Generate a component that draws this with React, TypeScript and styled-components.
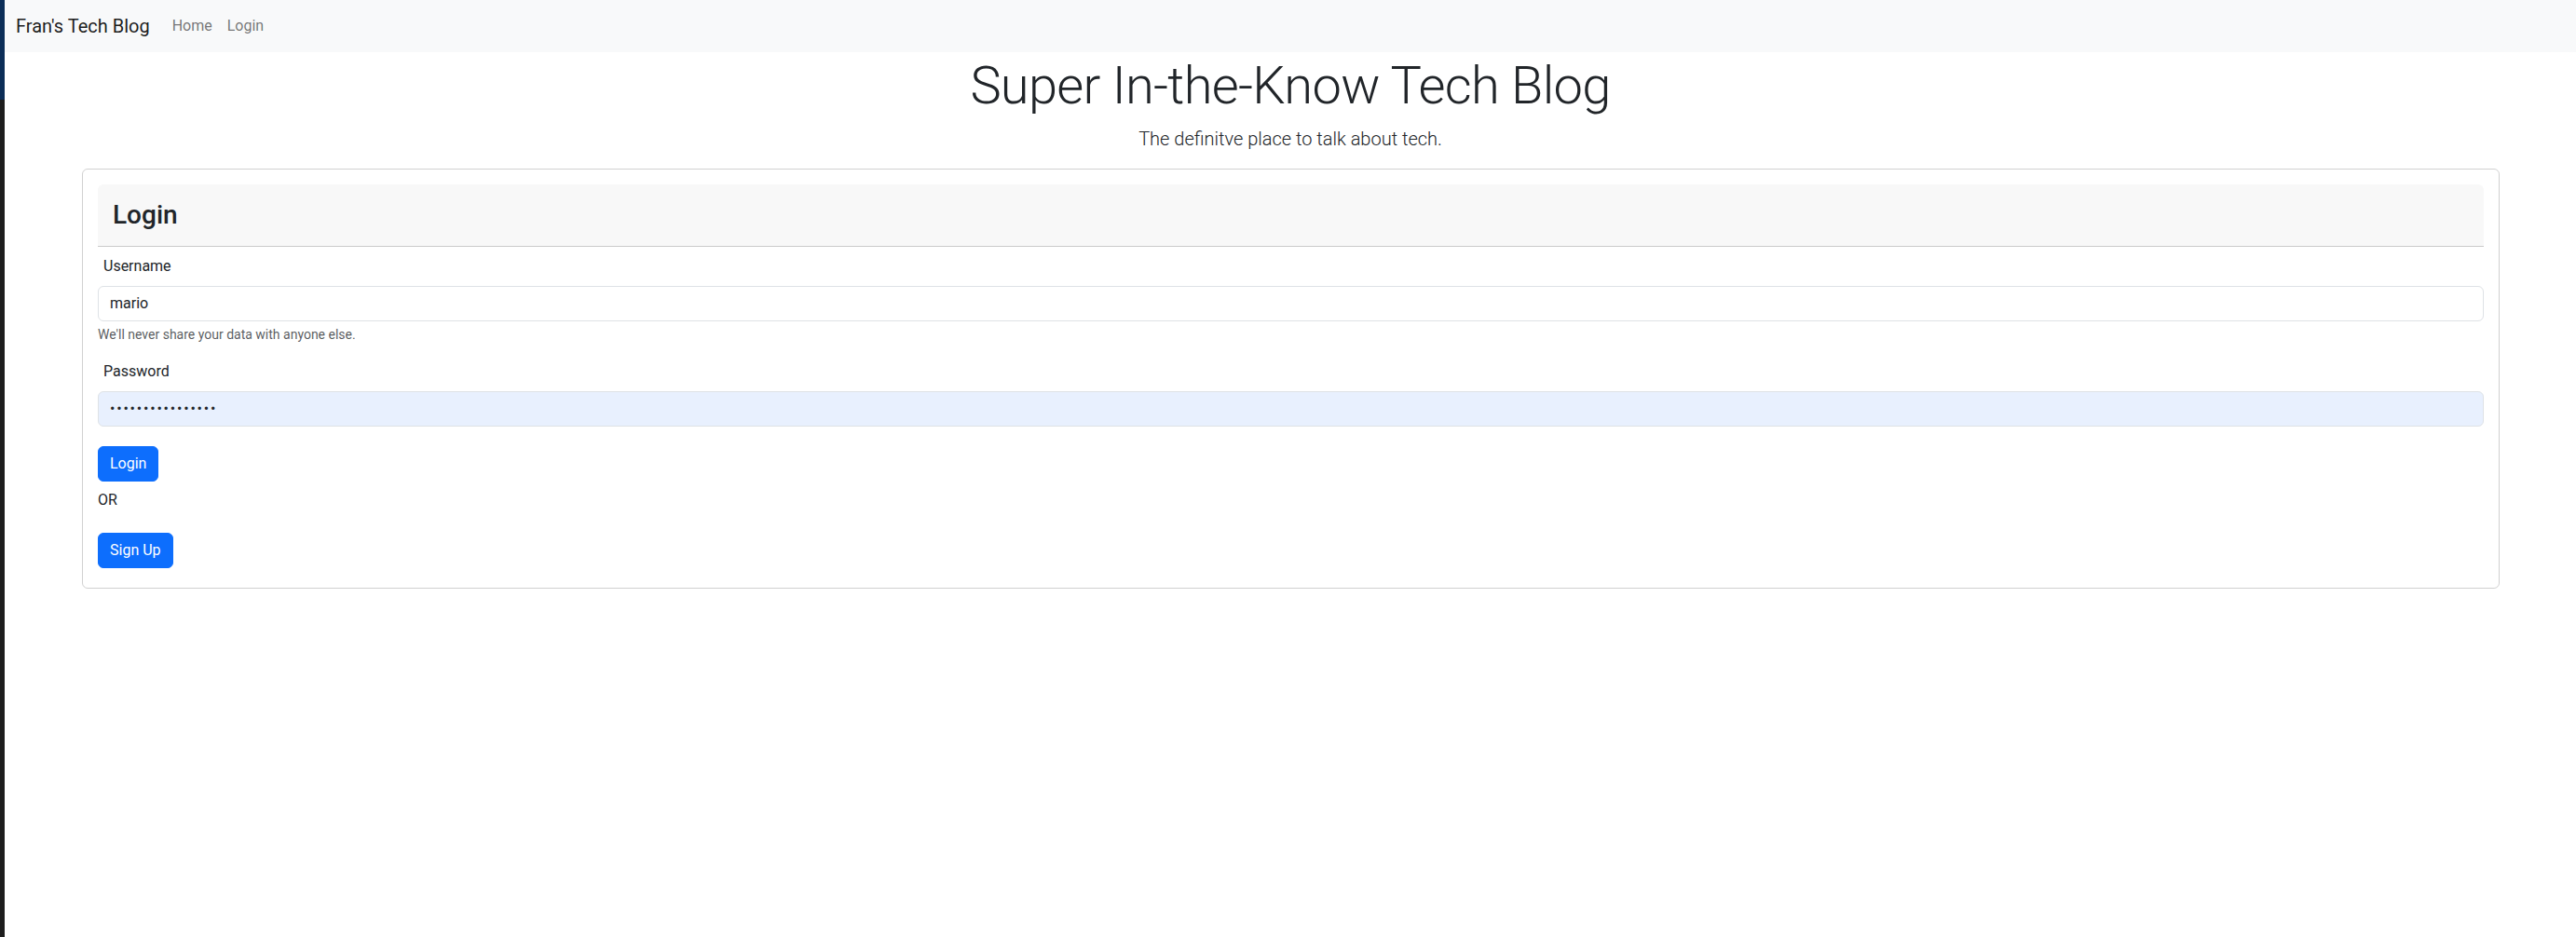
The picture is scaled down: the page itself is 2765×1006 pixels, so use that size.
import styled, { createGlobalStyle } from "styled-components";

const GlobalStyle = createGlobalStyle`
  * {
    box-sizing: border-box;
  }
  body {
    margin: 0;
    background: #ffffff;
    color: #212529;
    font-family: Roboto, "Noto Sans", "Liberation Sans", sans-serif;
    font-size: 16px;
    line-height: 1.5;
  }
`;

function App() {
  return (
    <>
      <GlobalStyle />
      <Screen>
        <EdgeStrip />
        <Page>
          <Navbar>
            <Brand href="#">Fran's Tech Blog</Brand>
            <NavLink href="#">Home</NavLink>
            <NavLink href="#">Login</NavLink>
          </Navbar>

          <Hero>
            <Title>Super In-the-Know Tech Blog</Title>
            <Lead>The definitve place to talk about tech.</Lead>
          </Hero>

          <Card>
            <CardHeader>
              <HeaderTitle>Login</HeaderTitle>
            </CardHeader>
            <form onSubmit={(e) => e.preventDefault()}>
              <Field>
                <Label htmlFor="username">Username</Label>
                <Input id="username" type="text" defaultValue="mario" />
                <HelpText>We'll never share your data with anyone else.</HelpText>
              </Field>
              <Field>
                <Label htmlFor="password" $top={17}>Password</Label>
                <Input
                  id="password"
                  type="password"
                  defaultValue="supersecretpass1"
                  $autofill
                />
              </Field>
              <Button type="submit" $top={21}>Login</Button>
              <OrText>OR</OrText>
              <Button type="button" $top={0}>Sign Up</Button>
            </form>
          </Card>
        </Page>
      </Screen>
    </>
  );
}

const Screen = styled.div`
  display: flex;
  min-height: 1006px;
`;

const EdgeStrip = styled.div`
  width: 5px;
  flex-shrink: 0;
  background: linear-gradient(#0b2d57 0, #0b2d57 107px, #1d1d1d 107px);
`;

const Page = styled.div`
  flex: 1;
  display: flex;
  flex-direction: column;
`;

const Navbar = styled.nav`
  height: 56px;
  display: flex;
  align-items: center;
  padding: 0 12px;
  background-color: #f8f9fa;
`;

const Brand = styled.a`
  margin-right: 16px;
  font-size: 20px;
  line-height: 30px;
  color: rgba(0, 0, 0, 0.9);
  text-decoration: none;
`;

const NavLink = styled.a`
  padding: 8px;
  font-size: 16px;
  color: rgba(0, 0, 0, 0.55);
  text-decoration: none;
`;

const Hero = styled.header`
  text-align: center;
  padding-top: 3px;
`;

const Title = styled.h1`
  margin: 0;
  font-size: 56px;
  font-weight: 300;
  line-height: 1.2;
  letter-spacing: -0.7px;
`;

const Lead = styled.p`
  margin: 8px 0 0;
  font-size: 20px;
  font-weight: 300;
  line-height: 1.5;
`;

const Card = styled.section`
  margin: 17px 82px 0 83px;
  padding: 16px 16px 21px;
  border: 1px solid rgba(0, 0, 0, 0.18);
  border-radius: 6px;
`;

const CardHeader = styled.div`
  padding: 16px;
  background-color: rgba(33, 37, 41, 0.03);
  border-bottom: 1px solid rgba(0, 0, 0, 0.18);
  border-radius: 6px 6px 0 0;
`;

const HeaderTitle = styled.h3`
  margin: 0;
  font-size: 28px;
  font-weight: 500;
  line-height: 1.2;
`;

const Field = styled.div`
  display: flex;
  flex-direction: column;
`;

const Label = styled.label<{ $top?: number }>`
  margin: ${(p) => p.$top ?? 9}px 0 9px 6px;
  font-size: 16px;
  line-height: 24px;
`;

const Input = styled.input<{ $autofill?: boolean }>`
  width: 100%;
  height: 38px;
  padding: 6px 12px;
  font-family: inherit;
  font-size: 16px;
  line-height: 24px;
  letter-spacing: ${(p) => (p.$autofill ? "1.8px" : "normal")};
  color: #212529;
  background-color: ${(p) => (p.$autofill ? "#e8f0fe" : "#ffffff")};
  border: 1px solid #dee2e6;
  border-radius: 6px;
  outline: none;
`;

const HelpText = styled.div`
  margin-top: 4px;
  font-size: 14px;
  line-height: 21px;
  color: rgba(33, 37, 41, 0.75);
`;

const Button = styled.button<{ $top: number }>`
  display: block;
  margin-top: ${(p) => p.$top}px;
  padding: 6px 12px;
  font-family: inherit;
  font-size: 16px;
  line-height: 24px;
  color: #ffffff;
  background-color: #0d6efd;
  border: 1px solid #0d6efd;
  border-radius: 6px;
  cursor: pointer;
`;

const OrText = styled.p`
  margin: 8px 0 23px;
  font-size: 16px;
  line-height: 24px;
`;

export default App;
